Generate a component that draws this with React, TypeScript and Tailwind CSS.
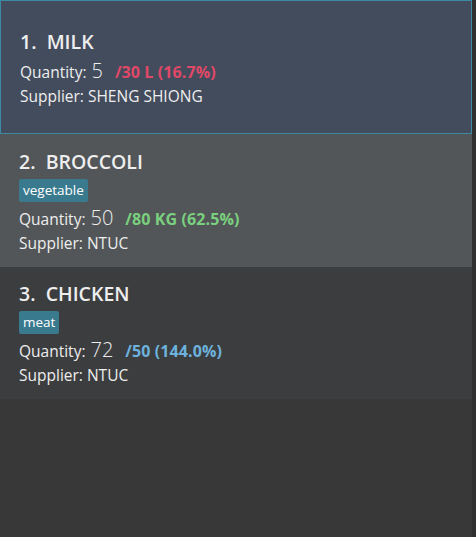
const items = [
  {
    id: 1,
    name: 'MILK',
    tag: null as string | null,
    qty: 5,
    rest: '/30 L (16.7%)',
    color: 'text-[#e04868]',
    supplier: 'SHENG SHIONG',
    row: 'h-[134px] bg-[#434c5d] border border-[#3c8aa3]',
  },
  {
    id: 2,
    name: 'BROCCOLI',
    tag: 'vegetable',
    qty: 50,
    rest: '/80 KG (62.5%)',
    color: 'text-[#7ad07e]',
    supplier: 'NTUC',
    row: 'h-[133px] bg-[#525658]',
  },
  {
    id: 3,
    name: 'CHICKEN',
    tag: 'meat',
    qty: 72,
    rest: '/50 (144.0%)',
    color: 'text-[#6cb2dc]',
    supplier: 'NTUC',
    row: 'h-[132px] bg-[#3c3d3f]',
  },
];

export default function App() {
  return (
    <div className="flex h-[537px] w-[476px] bg-[#383838] font-['Open_Sans',sans-serif] text-[#eeeeee]">
      <div className="w-[472px]">
        {items.map((it) => (
          <div key={it.id} className={`flex flex-col justify-center pl-[19px] ${it.row}`}>
            <div className="whitespace-pre text-[19.5px] font-semibold leading-[26px]">
              {it.id}.  {it.name}
            </div>
            {it.tag && (
              <div className="mt-[4px] flex">
                <span className="rounded-[2px] bg-[#3a7a8f] px-[4px] text-[13.5px] leading-[23px] text-white">
                  {it.tag}
                </span>
              </div>
            )}
            <div className="mt-[2px] flex items-baseline text-[15.5px] leading-[27px]">
              <span>Quantity:</span>
              <span className="ml-[5px] text-[20px] font-light">{it.qty}</span>
              <span className={`ml-[12px] text-[16px] font-bold tracking-[0.1px] ${it.color}`}>{it.rest}</span>
            </div>
            <div className="text-[15.5px] leading-[20px]">Supplier: {it.supplier}</div>
          </div>
        ))}
      </div>
      <div className="w-[4px] bg-[#303030]" />
    </div>
  );
}
